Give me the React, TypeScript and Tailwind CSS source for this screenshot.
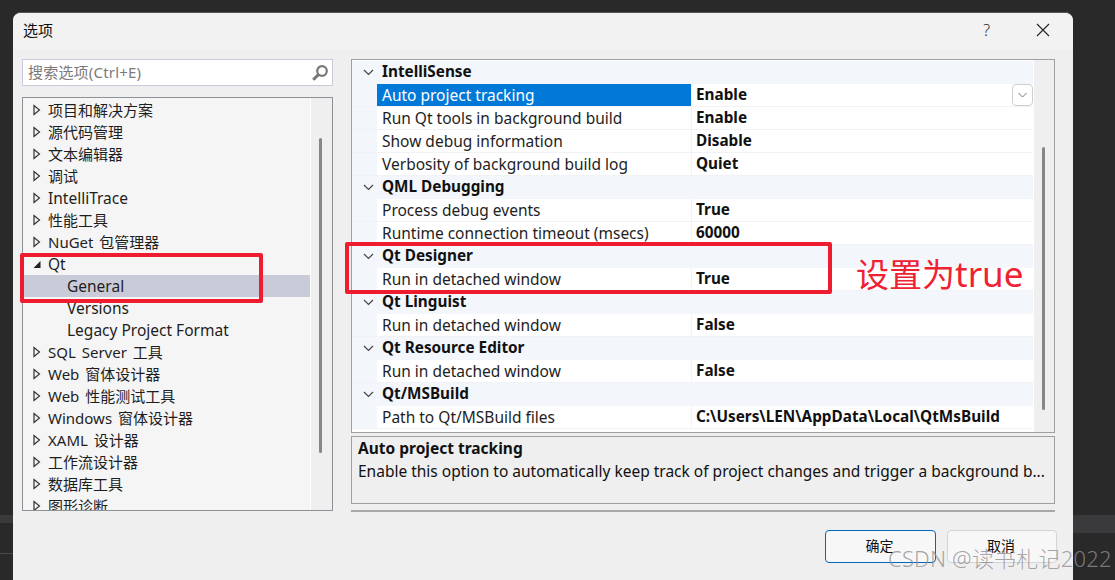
const cjk = "font-['Noto_Sans','Noto_Sans_CJK_SC',sans-serif]";

const treeItems: { label: string; state?: "closed" | "open" | "child"; selected?: boolean }[] = [
  { label: "项目和解决方案" },
  { label: "源代码管理" },
  { label: "文本编辑器" },
  { label: "调试" },
  { label: "IntelliTrace" },
  { label: "性能工具" },
  { label: "NuGet 包管理器" },
  { label: "Qt", state: "open" },
  { label: "General", state: "child", selected: true },
  { label: "Versions", state: "child" },
  { label: "Legacy Project Format", state: "child" },
  { label: "SQL Server 工具" },
  { label: "Web 窗体设计器" },
  { label: "Web 性能测试工具" },
  { label: "Windows 窗体设计器" },
  { label: "XAML 设计器" },
  { label: "工作流设计器" },
  { label: "数据库工具" },
  { label: "图形诊断" },
];

const groups = [
  {
    title: "IntelliSense",
    rows: [
      ["Auto project tracking", "Enable"],
      ["Run Qt tools in background build", "Enable"],
      ["Show debug information", "Disable"],
      ["Verbosity of background build log", "Quiet"],
    ],
  },
  {
    title: "QML Debugging",
    rows: [
      ["Process debug events", "True"],
      ["Runtime connection timeout (msecs)", "60000"],
    ],
  },
  { title: "Qt Designer", rows: [["Run in detached window", "True"]] },
  { title: "Qt Linguist", rows: [["Run in detached window", "False"]] },
  { title: "Qt Resource Editor", rows: [["Run in detached window", "False"]] },
  { title: "Qt/MSBuild", rows: [["Path to Qt/MSBuild files", "C:\\Users\\LEN\\AppData\\Local\\QtMsBuild"]] },
];

function Arrow({ open }: { open: boolean }) {
  return (
    <svg width="10" height="12" viewBox="0 0 10 12" className="shrink-0">
      {open ? (
        <path d="M8.5 3v7H1.5z" fill="#222" />
      ) : (
        <path d="M2 1.5v9l5.5-4.5z" fill="none" stroke="#333" strokeWidth="1.2" />
      )}
    </svg>
  );
}

function Chevron() {
  return (
    <svg width="11" height="7" viewBox="0 0 11 7">
      <path d="M1 1l4.5 4.5L10 1" fill="none" stroke="#444" strokeWidth="1.2" />
    </svg>
  );
}

// latin labels run a bit wider than the CJK ones in the original font
function labelSize(label: string) {
  if (/^[\x00-\x7f]+$/.test(label)) return "text-[15.5px]";
  if (label.includes(" ")) return "text-[15px] [word-spacing:2px]";
  return "text-[15px]";
}

function Tree() {
  return (
    <div className="mt-[11px] flex h-[414px] w-[311px] overflow-hidden border border-[#8c9097] bg-[#f5f5f5]">
      <div className="w-[287px] shrink-0 pt-[1px]">
        {treeItems.map((item) => (
          <div
            key={item.label}
            className={
              "flex h-[22px] items-center leading-[22px] text-[#1e1e1e] " +
              labelSize(item.label) +
              (item.selected ? " bg-[#c9cbd9]" : "") +
              (item.state === "child" ? " pl-[44px]" : " pl-[9px]")
            }
          >
            {item.state !== "child" && <Arrow open={item.state === "open"} />}
            <span className={item.state === "child" ? "" : "ml-[6px]"}>{item.label}</span>
          </div>
        ))}
      </div>
      <div className="flex-1 border-l border-white bg-[#efefef] pt-[40px] pl-[8px]">
        <div className="h-[315px] w-[3px] rounded-sm bg-[#868686]" />
      </div>
    </div>
  );
}

function PropertyGrid() {
  return (
    <div className="flex h-[374px] overflow-hidden border border-[#a0a0a0] bg-white">
      <div className="w-[681px] shrink-0 pt-[1px]">
        {groups.map((group) => (
          <div key={group.title}>
            <div className="flex h-[23px] items-center bg-[#f3f6fb] text-[15.3px] leading-[21px] font-bold text-[#111]">
              <span className="flex w-[30px] justify-center pl-[2px]">
                <Chevron />
              </span>
              <span className="pb-[2px]">{group.title}</span>
            </div>
            {group.rows.map(([name, value]) => {
              const active = name === "Auto project tracking";
              return (
                <div key={name} className="flex h-[23px] border-b border-[#f0f2f6] bg-white text-[15.5px] leading-[23px]">
                  <div className="w-[25px] shrink-0 bg-[#f3f6fb]" />
                  <div
                    className={
                      "w-[315px] shrink-0 border-r border-[#f0f2f6] pl-[5px] " +
                      (active ? "bg-[#0078d7] text-white" : "text-[#1e1e1e]")
                    }
                  >
                    {name}
                  </div>
                  <div className="flex flex-1 items-start justify-between pl-[4px] text-[15.3px] leading-[20px] font-bold text-[#111]">
                    {value}
                    {active && (
                      <span className="flex h-[22px] w-[21px] items-center justify-center rounded-sm border border-[#cfcfcf] bg-white">
                        <svg width="9" height="6" viewBox="0 0 9 6">
                          <path d="M.5 1l4 4 4-4" fill="none" stroke="#777" strokeWidth="1" />
                        </svg>
                      </span>
                    )}
                  </div>
                </div>
              );
            })}
          </div>
        ))}
      </div>
      <div className="flex-1 border-l border-white bg-[#efefef] pt-[87px] pl-[8px]">
        <div className="h-[263px] w-[3px] rounded-sm bg-[#868686]" />
      </div>
    </div>
  );
}

export default function App() {
  return (
    <div className={"relative h-[580px] w-[1115px] overflow-hidden bg-[#292929] pt-3 pl-[13px] " + cjk}>
      <div className="absolute top-[515px] left-0 h-[8px] w-[13px] bg-[#3a3a3c]" />
      <div className="absolute top-[553px] left-0 h-px w-[13px] bg-[#4a4a4a]" />
      <div className="absolute top-[515px] left-[1073px] h-[18px] w-[42px] bg-[#3a3a3c]" />

      <div className="relative h-[568px] w-[1060px] overflow-hidden rounded-t-lg border-t border-[#555] bg-[#efefef]">
        <div className="flex h-[37px] items-center justify-between bg-[#f2f2f2] pr-[23px] pb-[3px] pl-[10px] text-[15px] text-[#111]">
          <span>选项</span>
          <div className="flex items-center gap-[46px]">
            <span className="text-[16px] font-light text-[#222]">?</span>
            <svg width="14" height="14" viewBox="0 0 14 14">
              <path d="M1 1l12 12M13 1L1 13" stroke="#222" strokeWidth="1.1" />
            </svg>
          </div>
        </div>

        <div className="flex gap-[18px] pt-[9px] pl-[9px]">
          <div className="w-[311px]">
            <div className="flex h-[27px] items-center justify-between border border-[#c9cbdd] bg-white pr-[3px] pl-[5px] text-[15px] tracking-[0.2px] text-[#7a7a7a]">
              <span>搜索选项(Ctrl+E)</span>
              <svg width="18" height="18" viewBox="0 0 18 18">
                <circle cx="11" cy="7" r="4.8" fill="none" stroke="#777" strokeWidth="2.2" />
                <path d="M7.4 10.6L2.2 15.8" stroke="#777" strokeWidth="3" />
              </svg>
            </div>
            <Tree />
          </div>

          <div className="w-[704px]">
            <PropertyGrid />
            <div className="mt-[3px] h-[68px] border border-[#a0a0a0] px-[6px] text-[15.5px] leading-[23px] text-[#111]">
              <div className="font-bold">Auto project tracking</div>
              <div className="truncate">Enable this option to automatically keep track of project changes and trigger a background b...</div>
            </div>
            <div className="mt-[6px] border-t-2 border-[#a8a8a8]" />
          </div>
        </div>

        <div className="mt-[18px] flex justify-end gap-[11px] pr-[16px] text-[14px] text-[#111]">
          <button className="h-[33px] w-[111px] rounded-[4px] border border-[#0067c0] bg-[#f7f7f7] pr-[2px] pb-[3px]">确定</button>
          <button className="h-[33px] w-[110px] rounded-[4px] border border-[#d4d4d4] bg-[#f7f7f7] pr-[2px] pb-[3px]">取消</button>
        </div>
      </div>

      <div className="absolute top-[253px] left-[20px] h-[50px] w-[243px] rounded-[2px] border-[4px] border-[#ee1c2e]" />
      <div className="absolute top-[242px] left-[345px] h-[52px] w-[487px] rounded-[2px] border-[4px] border-[#ee1c2e]" />
      <div className="absolute top-[252px] left-[856px] text-[33px] leading-[44px] text-[#ee2233]">
        设置为<span className="text-[35px]">true</span>
      </div>
      <div className="absolute top-[544px] left-[888px] text-[22px] leading-[28px] font-light tracking-[0.2px] text-[#8f8f8f]/80">
        CSDN @读书札记2022
      </div>
    </div>
  );
}
